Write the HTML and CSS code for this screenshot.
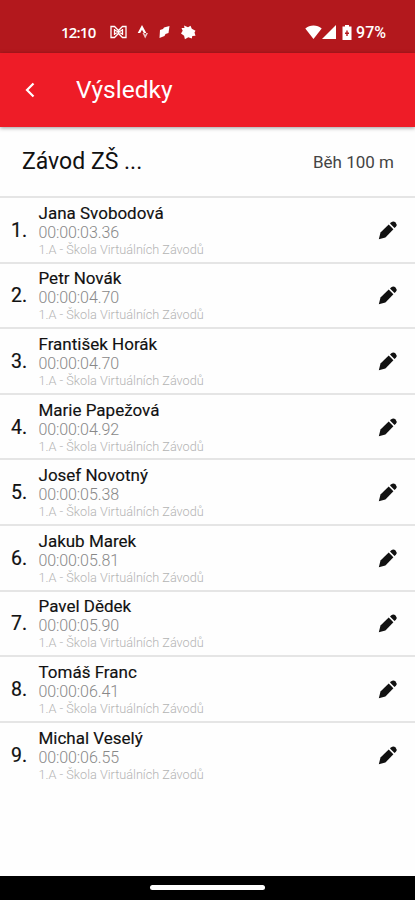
FILE: index.html
```html
<!DOCTYPE html>
<html lang="cs">
<head>
<meta charset="utf-8">
<title>Výsledky</title>
<link rel="stylesheet" href="styles.css">
</head>
<body>
<svg class="defs" width="0" height="0">
  <symbol id="pencil" viewBox="0 0 20 20">
    <path d="M.8 19.200l1.700-6.700 8.200-7.900 4.700 4.700-8 8.200z"/>
    <path d="M12 3.500l1.300-1.300a3.300 3.300 0 0 1 4.600 4.600L16.500 8.100z"/>
  </symbol>
</svg>
<header class="status">
  <span class="clock">12:10</span>
  <div class="notices">
    <svg width="17" height="14" viewBox="0 0 17 14" fill="none" stroke="#fff" stroke-width="1.3"><path d="M4.500 12.500H1v-11h3.500l4 4 4-4H16v11h-3.500l-4-4zM4.500 4v6M12.500 4v6M4.500 5l8 4M12.500 5l-8 4"/></svg>
    <svg width="12" height="14" viewBox="0 0 12 14" fill="#fff"><path d="M5 0l4.300 8H6.800L5 4.700 3.200 8H.7z"/><path d="M5.500 8h1.700l1 2 1-2H11l-2.800 5.500z" opacity=".75"/></svg>
    <svg width="11" height="14" viewBox="0 0 11 14" fill="#fff"><path d="M1 5l3-1 1-1.500L10.500 1l-1 7-3 1-1 2-5 2z"/></svg>
    <svg width="16" height="15" viewBox="0 0 16 15" fill="#fff"><path d="M4 .5l4 1.700L10.500.8l1.300 3 3.700 2-1 1.700 1 3.200-3.200.3-.5 2.500-3.500-1.200-3.400 2-.8-3.500L1 8.500l1.700-2.700L1.500 3l3 0z"/></svg>
  </div>
  <div class="system">
    <svg width="17" height="14" viewBox="0 0 17 14" fill="#fff"><path d="M8.500 14L.3 3.500C4.500-.6 12.500-.6 16.700 3.500z"/></svg>
    <svg width="14" height="14" viewBox="0 0 14 14" fill="#fff"><path d="M14 0v14H0z"/></svg>
    <svg class="battery" width="10" height="15" viewBox="0 0 10 15"><path fill="#fff" d="M3 0h4v1.500h2.500V15H.5V1.500H3z"/><path fill="#b3181d" d="M4.300 5.500h1.400v2h1.300v1.400H5.700v2H4.300v-2H3V7.500h1.300z"/></svg>
    <span>97%</span>
  </div>
</header>
<nav class="appbar">
  <svg class="back" width="10" height="16" viewBox="0 0 10 16" fill="none" stroke="#fff" stroke-width="2.200"><path d="M8.500 1.500L2 8l6.500 6.500"/></svg>
  <h1>Výsledky</h1>
</nav>
<main>
  <div class="race"><h2>Závod ZŠ ...</h2><span>Běh 100 m</span></div>
  <ol class="results">
    <li><b class="rank">1.</b><div class="info"><p class="name">Jana Svobodová</p><p class="time">00:00:03.36</p><p class="school">1.A - Škola Virtuálních Závodů</p></div><svg class="edit"><use href="#pencil"/></svg></li>
    <li><b class="rank">2.</b><div class="info"><p class="name">Petr Novák</p><p class="time">00:00:04.70</p><p class="school">1.A - Škola Virtuálních Závodů</p></div><svg class="edit"><use href="#pencil"/></svg></li>
    <li><b class="rank">3.</b><div class="info"><p class="name">František Horák</p><p class="time">00:00:04.70</p><p class="school">1.A - Škola Virtuálních Závodů</p></div><svg class="edit"><use href="#pencil"/></svg></li>
    <li><b class="rank">4.</b><div class="info"><p class="name">Marie Papežová</p><p class="time">00:00:04.92</p><p class="school">1.A - Škola Virtuálních Závodů</p></div><svg class="edit"><use href="#pencil"/></svg></li>
    <li><b class="rank">5.</b><div class="info"><p class="name">Josef Novotný</p><p class="time">00:00:05.38</p><p class="school">1.A - Škola Virtuálních Závodů</p></div><svg class="edit"><use href="#pencil"/></svg></li>
    <li><b class="rank">6.</b><div class="info"><p class="name">Jakub Marek</p><p class="time">00:00:05.81</p><p class="school">1.A - Škola Virtuálních Závodů</p></div><svg class="edit"><use href="#pencil"/></svg></li>
    <li><b class="rank">7.</b><div class="info"><p class="name">Pavel Dědek</p><p class="time">00:00:05.90</p><p class="school">1.A - Škola Virtuálních Závodů</p></div><svg class="edit"><use href="#pencil"/></svg></li>
    <li><b class="rank">8.</b><div class="info"><p class="name">Tomáš Franc</p><p class="time">00:00:06.41</p><p class="school">1.A - Škola Virtuálních Závodů</p></div><svg class="edit"><use href="#pencil"/></svg></li>
    <li><b class="rank">9.</b><div class="info"><p class="name">Michal Veselý</p><p class="time">00:00:06.55</p><p class="school">1.A - Škola Virtuálních Závodů</p></div><svg class="edit"><use href="#pencil"/></svg></li>
  </ol>
</main>
<footer class="gesture"><div class="handle"></div></footer>
</body>
</html>
```
FILE: styles.css
```css
* { box-sizing: border-box; margin: 0; padding: 0; }
body {
  height: 900px;
  display: flex;
  flex-direction: column;
  overflow: hidden;
  background: #fefefe;
  color: #111;
  font-family: Roboto, "Liberation Sans", sans-serif;
}
svg { display: block; flex: none; }
.defs { display: none; }
.status {
  height: 53px;
  flex: none;
  display: flex;
  align-items: center;
  padding: 11px 29px 0 61px;
  background: #b3181d;
  color: #fff;
  font-size: 15px;
  font-weight: 500;
}
.clock { width: 49px; font-family: "Open Sans", sans-serif; font-weight: 600; letter-spacing: -0.8px; }
.notices { display: flex; align-items: center; gap: 10px; }
.system { margin-left: auto; display: flex; align-items: center; font-size: 16px; }
.battery { margin: 0 4px 0 6px; }
.appbar {
  height: 74px;
  flex: none;
  display: flex;
  align-items: center;
  padding-left: 25px;
  background: #ee1c27;
  color: #fff;
  box-shadow: 0 1px 4px rgba(0, 0, 0, .4);
}
.appbar h1 { margin: -2px 0 0 41px; font-size: 24.500px; font-weight: 400; }
main { flex: 1; }
.race {
  height: 69px;
  display: flex;
  align-items: center;
  justify-content: space-between;
  padding: 0 21px 0 22px;
}
.race h2 { font-size: 23px; font-weight: 400; }
.race span { font-size: 17px; color: #444; }
.results { list-style: none; }
.results li {
  height: 65.600px;
  display: flex;
  align-items: center;
  padding: 0 17px 0 11px;
  border-top: 2px solid #e5e5e5;
}
.rank { width: 27.500px; padding-top: 1px; font-size: 19.500px; font-weight: 400; -webkit-text-stroke: .2px; }
.info { flex: 1; padding-top: 1px; }
.name { font-size: 17px; line-height: 21px; -webkit-text-stroke: .15px; }
.time { font-size: 16px; line-height: 18px; letter-spacing: -.1px; font-weight: 300; color: #888; }
.school { font-size: 12.700px; line-height: 16px; font-weight: 300; color: #b4b4b4; }
.edit { width: 20px; height: 20px; fill: #111; }
.gesture {
  height: 24.500px;
  flex: none;
  display: flex;
  align-items: center;
  justify-content: center;
  background: #000;
}
.handle { width: 115px; height: 5px; border-radius: 3px; background: #fff; }
```
